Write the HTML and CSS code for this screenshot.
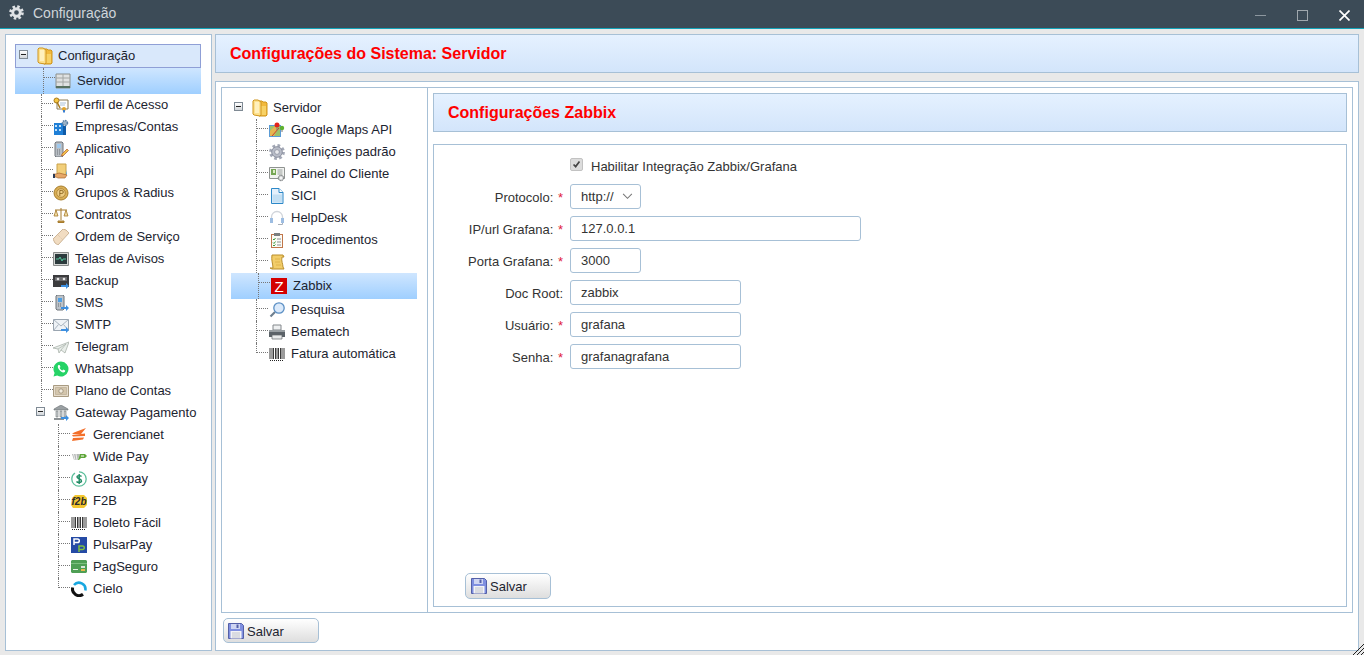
FILE: index.html
```
<!doctype html>
<html>
<head>
    <meta charset="utf-8" />
    <title>Configuração</title>
    <link rel="stylesheet" href="styles.css">
</head>
<body>
    <svg class="sprite" xmlns="http://www.w3.org/2000/svg">
        <symbol id="i-folder" viewBox="0 0 16 18"><path d="M7 2h3l1 1h3l1 1v12l-1 1H7z" fill="#f2b93c" stroke="#cf951c"/><path d="M9 7h5v9H9z" fill="#f8d266"/><path d="M1 2l1-1h4l3 2v13l-1 1-6-1-1-1z" fill="#fde08c" stroke="#cf951c"/><path d="M3 3h4v11H3z" fill="#fff0bd"/></symbol>
        <symbol id="i-server" viewBox="0 0 16 16"><path d="M1 1h14v14H1z" fill="#dfe1e1" stroke="#8b8f8c"/><path d="M8 1v12M1 5h14M1 9h14" stroke="#a3a6a4"/><path d="M1 13h14v2H1z" fill="#56705f"/></symbol>
        <symbol id="i-perfil" viewBox="0 0 16 16"><path d="M4 3h11v9H4z" fill="#fff" stroke="#8a7a55"/><path d="M7 6h6M7 8h5" stroke="#a9c0d8"/><circle cx="3.500" cy="3.500" r="2.500" fill="#f4c542" stroke="#a8791a"/><path d="M4 5l3 6" stroke="#a8791a" stroke-width="1.500"/><circle cx="11" cy="12" r="2" fill="#e2a52e"/><path d="M10 13v3l1-1 1 1v-3" fill="#3b7fd0"/></symbol>
        <symbol id="i-empresas" viewBox="0 0 16 16"><path d="M1 4h9v12H1z" fill="#1f7fd6"/><path d="M2 6h2v2H2zM6 6h2v2H6zM2 10h2v2H2zM6 10h2v2H6z" fill="#bfe0fb"/><path d="M10 7h3v9h-3z" fill="#0f5ba8"/><circle cx="12" cy="4" r="2.500" fill="#9db4c8" stroke="#5a7fa5" stroke-width="1.500" stroke-dasharray="1.500 .8"/></symbol>
        <symbol id="i-aplicativo" viewBox="0 0 16 16"><path d="M3 1h6l1 1v13l-1 1H3l-1-1V2z" fill="#b8bec4" stroke="#70767c"/><path d="M4 3h4v4H4z" fill="#9fc9ee"/><path d="M4 9h4M4 11h4M4 13h4" stroke="#6c7278" stroke-dasharray="1 1"/><path d="M9 13l5-5 1.500 1.500-5 5-2 .5z" fill="#f0c24a" stroke="#b45a2a" stroke-width=".7"/></symbol>
        <symbol id="i-api" viewBox="0 0 16 16"><path d="M4 1h9v11H4z" fill="#f2cf7a" stroke="#c9a24a"/><path d="M13 7l1 4-1 1z" fill="#5aa2dc"/><path d="M0 11h3l3-1 4 1 4 1-2 3H5l-2-1H0z" fill="#e7a869" stroke="#a8672f" stroke-width=".7"/><path d="M0 11h2v4H0z" fill="#2b3a55"/></symbol>
        <symbol id="i-coin" viewBox="0 0 16 16"><circle cx="8" cy="8" r="7" fill="#d9ae55" stroke="#a97f2e"/><circle cx="8" cy="8" r="4.300" fill="#eecd85" stroke="#b58c3c"/><path d="M6.800 11V5.500h2a1.400 1.400 0 010 3h-2" fill="none" stroke="#96712a"/></symbol>
        <symbol id="i-scales" viewBox="0 0 16 16"><path d="M8 1v12M2 3h12M5 14h6v1.500H5z" stroke="#a57a2c" fill="#c69a46"/><path d="M3 3L1 9h4zM13 3l-2 6h4z" fill="#f1dba2" stroke="#a57a2c" stroke-width=".8"/></symbol>
        <symbol id="i-ticket" viewBox="0 0 16 16"><path d="M0 10L10 0l3 1 3 3L5 16l-3-2z" fill="#f1dcc1" stroke="#cdb597"/><path d="M5 6l5 5" stroke="#d9c2a5" stroke-dasharray="1 1"/></symbol>
        <symbol id="i-monitor" viewBox="0 0 16 16"><path d="M.5 1.500h15v13H.5z" fill="#d4d6d4" stroke="#888b8a"/><path d="M2 3h12v10H2z" fill="#2c3b3d"/><path d="M3 8h3l1-2 2 4 1-2h3" fill="none" stroke="#53c49a"/></symbol>
        <symbol id="i-backup" viewBox="0 0 16 16"><path d="M0 2h16v12H0z" fill="#3c3c3e"/><path d="M2 4h12v4H2z" fill="#6b6b6e"/><circle cx="5" cy="6" r="1.300" fill="#e6e6e6"/><circle cx="11" cy="6" r="1.300" fill="#e6e6e6"/><path d="M8 12h5V10l3 3-3 3v-2H8z" fill="#3d8fe0"/></symbol>
        <symbol id="i-sms" viewBox="0 0 16 16"><path d="M4 0h6l1 1v13l-1 1H4l-1-1V1z" fill="#bcc2c8" stroke="#6f757b"/><path d="M5 3h4v4H5z" fill="#4f9fe3"/><path d="M5 9h4M5 11h4" stroke="#676d73" stroke-dasharray="1 1"/><path d="M8 12h5v-2l3 3-3 3v-2H8z" fill="#3d8fe0"/></symbol>
        <symbol id="i-mail" viewBox="0 0 16 16"><path d="M.5 2.500h15v11H.5z" fill="#eef2f6" stroke="#9aa5b0"/><path d="M.5 2.500L8 9l7.500-6.500M.5 13.500l5-6M15.500 13.500l-5-6" fill="none" stroke="#aab4bf"/><path d="M8 12h5v-2l3 3-3 3v-2H8z" fill="#3d8fe0"/></symbol>
        <symbol id="i-plane" viewBox="0 0 16 16"><path d="M0 9l16-6-4 11-4-3-2 3-1-4z" fill="#e9eeea" stroke="#a9b2ab" stroke-width=".8"/><path d="M5 10l8-5-5 6" fill="none" stroke="#a9b2ab" stroke-width=".7"/></symbol>
        <symbol id="i-whatsapp" viewBox="0 0 16 16"><path d="M8 .5a7.500 7.500 0 00-6.400 11.400L.5 15.500l3.700-1A7.500 7.500 0 108 .5z" fill="#25d366"/><path d="M5.500 4c-1 1-1 2.500.3 4.300 1.300 1.900 3 3.300 4.700 3.300 1 0 1.800-1 1.700-2l-2-1-.8 1c-1-.3-2.300-1.600-2.800-2.800l.9-.8-.9-2z" fill="#fff"/></symbol>
        <symbol id="i-money" viewBox="0 0 16 16"><path d="M.5 2.500h15v11H.5z" fill="#e6dccb" stroke="#a99b82"/><path d="M2.500 4.500h11v7h-11z" fill="#d4c6ad" stroke="#b5a78e" stroke-width=".6"/><circle cx="8" cy="8" r="2.200" fill="#f2ecdf" stroke="#8c7f68" stroke-width=".7"/></symbol>
        <symbol id="i-bank" viewBox="0 0 16 16"><path d="M8 0l7 4v1H1V4z" fill="#9aa0a3" stroke="#6a6f72" stroke-width=".6"/><path d="M3 6h2v6H3zM7 6h2v6H7zM11 6h2v6h-2z" fill="#c9ced0" stroke="#73787b" stroke-width=".6"/><path d="M1 13h10v2H1z" fill="#8c9194"/><path d="M8 12h5v-2l3 3-3 3v-2H8z" fill="#3d8fe0"/></symbol>
        <symbol id="i-gerencianet" viewBox="0 0 16 16"><path d="M15 1L3 5.500 1 7h9zM14 6.500L1 8l1 1.500 12-.5zM13 10.500L2 11l-1 3 11-1.500z" fill="#f36f2a"/></symbol>
        <symbol id="i-widepay" viewBox="0 0 16 16"><path d="M1 5h8l-2 6H3z" fill="#b5b8b6"/><path d="M2.500 5L4 11M5 5l1 6" stroke="#fff" stroke-width=".8"/><path d="M9 5h5l2 2-2 2h-4l-2 2H7z" fill="#5fa63a"/><path d="M10 7h3" stroke="#fff"/></symbol>
        <symbol id="i-galax" viewBox="0 0 16 16"><path d="M8 .8a7.200 7.200 0 017.200 7.200M15.200 8A7.200 7.200 0 018 15.200 7.200 7.200 0 01.800 8 7.200 7.200 0 014 2" fill="none" stroke="#5cbf9b" stroke-width="1.300"/><path d="M10.500 5.500C10 4.500 6 4 6 6c0 2 4.500 1.500 4.500 4 0 2-4 1.800-5 .5M8.200 3v10" fill="none" stroke="#1f8a63" stroke-width="1.400"/></symbol>
        <symbol id="i-f2b" viewBox="0 0 16 16"><path d="M4 2h9l3 3v7l-3 3H2l-2-3 1-7z" fill="#f3c62f"/><text x="8" y="12" class="svg-f2b">f2b</text></symbol>
        <symbol id="i-barcode" viewBox="0 0 16 16"><path d="M1 2v11M3 2v11M4.500 2v11M6.500 2v11M8 2v11M9.500 2v11M11.500 2v11M13 2v11M15 2v11" stroke="#222" stroke-width=".9"/><path d="M1 14.500h14" stroke="#222" stroke-dasharray="1 1"/></symbol>
        <symbol id="i-pulsar" viewBox="0 0 16 16"><path d="M0 0h16v16H0z" fill="#254aa5"/><path d="M3 8V2h3.500a1.800 1.800 0 010 3.600H3" fill="none" stroke="#fff" stroke-width="1.500"/><path d="M8 15V9h3.500a1.800 1.800 0 010 3.600H8" fill="none" stroke="#7fc041" stroke-width="1.500"/></symbol>
        <symbol id="i-card" viewBox="0 0 16 16"><path d="M1 1h14l1 1v11l-1 1H1l-1-1V2z" fill="#4f9f55"/><path d="M0 4h16v1H0z" fill="#7cc07f"/><path d="M2 10h5v1H2z" fill="#e6f2e4"/><path d="M10 7h4v2h-4z" fill="#d7e6d8"/><path d="M10 10h4v2h-4z" fill="#e9b94b"/></symbol>
        <symbol id="i-cielo" viewBox="0 0 16 16"><path d="M1.700 6.500A6.500 6.500 0 0012 13.200" fill="none" stroke="#111" stroke-width="3"/><path d="M3 4A6.500 6.500 0 0114.300 9.500" fill="none" stroke="#18a7e0" stroke-width="2.600"/></symbol>
        <symbol id="i-maps" viewBox="0 0 16 16"><path d="M0 3h12v12H0z" fill="#5b9bd5"/><path d="M1 4h10v10H1z" fill="#9cc26a"/><path d="M1 9l5-5 3 2-4 8H1z" fill="#e6b650"/><path d="M3 14l7-8" stroke="#c7442c"/><circle cx="8" cy="3" r="2.500" fill="#e2231a"/><circle cx="13" cy="6" r="2.200" fill="#5fb130"/><path d="M8 5v3M13 8v2" stroke="#777"/></symbol>
        <symbol id="i-gear" viewBox="0 0 16 16"><circle cx="8" cy="8" r="6.300" fill="none" stroke="#a3a8b6" stroke-width="3.200" stroke-dasharray="2.600 2.300"/><circle cx="8" cy="8" r="5.300" fill="#b8bcc8" stroke="#8d92a0"/><circle cx="8" cy="8" r="2.400" fill="#e9eaee" stroke="#8d92a0" stroke-width=".8"/></symbol>
        <symbol id="i-painel" viewBox="0 0 16 16"><path d="M.5 1.500h15v11H.5z" fill="#f2f3f1" stroke="#8f9391"/><path d="M2 3h5v6H2z" fill="#76a655"/><path d="M4 4h2v3H4z" fill="#dcecc8"/><path d="M8.500 4h5M8.500 6h5M8.500 8h5" stroke="#9aa09d"/><circle cx="12" cy="12" r="2.700" fill="#d5d7d8" stroke="#6d7173" stroke-dasharray="1.500 .6"/><circle cx="12" cy="12" r="1" fill="#fff"/></symbol>
        <symbol id="i-doc" viewBox="0 0 16 16"><path d="M2.500.5H10l4 4v11H2.500z" fill="#e4f0fb" stroke="#2c88c8"/><path d="M10 .5v4h4" fill="#fff" stroke="#2c88c8"/><path d="M3.500 6.500h9.500v8H3.500z" fill="#c3dff3"/></symbol>
        <symbol id="i-headset" viewBox="0 0 16 16"><path d="M2.500 9V7a5.500 5.500 0 0111 0v2" fill="none" stroke="#d0d4da" stroke-width="1.300"/><path d="M1 8h3v5H1zM12 8h3v5h-3z" fill="#9dbde2"/><path d="M13.500 13v1.500H9" fill="none" stroke="#a9b0ba"/></symbol>
        <symbol id="i-clip" viewBox="0 0 16 16"><path d="M2 2h12v14H2z" fill="#c0764a"/><path d="M3 3h10v12H3z" fill="#fbfbf6"/><path d="M5 1h6v3H5z" fill="#7b7f80"/><path d="M4 7l1 1 1.500-2M4 10.500l1 1 1.500-2M4 13l1 1 1.500-1.500" fill="none" stroke="#3b9a3e"/><path d="M8 7h4M8 10h4M8 13h4" stroke="#8a8f90"/></symbol>
        <symbol id="i-scroll" viewBox="0 0 16 16"><path d="M3 1h11l1 2h-2c-1 4 1 7 1 10l1 2H3l-2-1h3C4 10 2 6 3 1z" fill="#f2cd69" stroke="#b98d2b"/><path d="M6 5h5M6 8h5M7 11h5" stroke="#e0b44c"/></symbol>
        <symbol id="i-zabbix" viewBox="0 0 16 16"><path d="M0 0h16v16H0z" fill="#d40000"/><text x="8" y="13.500" class="svg-z">Z</text></symbol>
        <symbol id="i-search" viewBox="0 0 16 16"><path d="M1.500 14.500L6 10" stroke="#6e7f8f" stroke-width="2.200"/><circle cx="10" cy="6" r="5.200" fill="#dbeafb" stroke="#5b8fc4" stroke-width="1.300"/></symbol>
        <symbol id="i-printer" viewBox="0 0 16 16"><path d="M4 1h8v5H4z" fill="#eef0f1" stroke="#83888c"/><path d="M0 6h16v7H0z" fill="#5b6268"/><path d="M0 6h16v2H0z" fill="#989ea2"/><path d="M3 11h10v4H3z" fill="#e8eaeb" stroke="#62676b" stroke-width=".7"/></symbol>
        <symbol id="i-floppy" viewBox="0 0 16 16"><path d="M.5.500h13l2 2v13H.500z" fill="#7f8fe0" stroke="#5460a8"/><path d="M3 1h9v5H3z" fill="#cfd5f2"/><path d="M8.500 1.500h2v3.500h-2z" fill="#5460a8"/><path d="M2.500 8h11v7.500h-11z" fill="#f3f3f6"/><path d="M4 10h8M4 12h8M4 14h8" stroke="#c0c4cc"/></symbol>
    </svg>

    <header class="titlebar">
        <svg class="title-gear" viewBox="0 0 16 16"><circle cx="8" cy="8" r="6.200" fill="none" stroke="#dfe2e5" stroke-width="3.200" stroke-dasharray="2.600 2.270"/><circle cx="8" cy="8" r="4" fill="none" stroke="#dfe2e5" stroke-width="3"/></svg>
        <span class="title-text">Configuração</span>
        <span class="win-btn win-min"></span>
        <span class="win-btn win-max"></span>
        <svg class="win-close" viewBox="0 0 11 11"><path d="M.5.5l10 10M10.500.5l-10 10" stroke="#fff" stroke-width="1.700"/></svg>
    </header>

    <div class="desk">
        <aside class="side-panel">
            <div class="tree-root boxed"><i class="exp"></i><svg class="ic-folder"><use href="#i-folder"/></svg><span>Configuração</span></div>
            <ul class="tree">
                <li class="row sel"><i class="tick"></i><svg class="ic"><use href="#i-server"/></svg><span>Servidor</span></li>
                <li class="row"><i class="tick"></i><svg class="ic"><use href="#i-perfil"/></svg><span>Perfil de Acesso</span></li>
                <li class="row"><i class="tick"></i><svg class="ic"><use href="#i-empresas"/></svg><span>Empresas/Contas</span></li>
                <li class="row"><i class="tick"></i><svg class="ic"><use href="#i-aplicativo"/></svg><span>Aplicativo</span></li>
                <li class="row"><i class="tick"></i><svg class="ic"><use href="#i-api"/></svg><span>Api</span></li>
                <li class="row"><i class="tick"></i><svg class="ic"><use href="#i-coin"/></svg><span>Grupos &amp; Radius</span></li>
                <li class="row"><i class="tick"></i><svg class="ic"><use href="#i-scales"/></svg><span>Contratos</span></li>
                <li class="row"><i class="tick"></i><svg class="ic"><use href="#i-ticket"/></svg><span>Ordem de Serviço</span></li>
                <li class="row"><i class="tick"></i><svg class="ic"><use href="#i-monitor"/></svg><span>Telas de Avisos</span></li>
                <li class="row"><i class="tick"></i><svg class="ic"><use href="#i-backup"/></svg><span>Backup</span></li>
                <li class="row"><i class="tick"></i><svg class="ic"><use href="#i-sms"/></svg><span>SMS</span></li>
                <li class="row"><i class="tick"></i><svg class="ic"><use href="#i-mail"/></svg><span>SMTP</span></li>
                <li class="row"><i class="tick"></i><svg class="ic"><use href="#i-plane"/></svg><span>Telegram</span></li>
                <li class="row"><i class="tick"></i><svg class="ic"><use href="#i-whatsapp"/></svg><span>Whatsapp</span></li>
                <li class="row"><i class="tick"></i><svg class="ic"><use href="#i-money"/></svg><span>Plano de Contas</span></li>
                <li class="row row-group"><i class="exp"></i><svg class="ic"><use href="#i-bank"/></svg><span>Gateway Pagamento</span></li>
                <li class="row child"><i class="tick"></i><svg class="ic"><use href="#i-gerencianet"/></svg><span>Gerencianet</span></li>
                <li class="row child"><i class="tick"></i><svg class="ic"><use href="#i-widepay"/></svg><span>Wide Pay</span></li>
                <li class="row child"><i class="tick"></i><svg class="ic"><use href="#i-galax"/></svg><span>Galaxpay</span></li>
                <li class="row child"><i class="tick"></i><svg class="ic"><use href="#i-f2b"/></svg><span>F2B</span></li>
                <li class="row child"><i class="tick"></i><svg class="ic"><use href="#i-barcode"/></svg><span>Boleto Fácil</span></li>
                <li class="row child"><i class="tick"></i><svg class="ic"><use href="#i-pulsar"/></svg><span>PulsarPay</span></li>
                <li class="row child"><i class="tick"></i><svg class="ic"><use href="#i-card"/></svg><span>PagSeguro</span></li>
                <li class="row child"><i class="tick last"></i><svg class="ic"><use href="#i-cielo"/></svg><span>Cielo</span></li>
            </ul>
        </aside>

        <main class="main-col">
            <h1 class="head head-top">Configurações do Sistema: Servidor</h1>
            <section class="main-panel">
                <div class="inner">
                    <nav class="sub-tree">
                        <div class="tree-root plain"><i class="exp"></i><svg class="ic-folder"><use href="#i-folder"/></svg><span>Servidor</span></div>
                        <ul class="tree">
                            <li class="row"><i class="tick"></i><svg class="ic"><use href="#i-maps"/></svg><span>Google Maps API</span></li>
                            <li class="row"><i class="tick"></i><svg class="ic"><use href="#i-gear"/></svg><span>Definições padrão</span></li>
                            <li class="row"><i class="tick"></i><svg class="ic"><use href="#i-painel"/></svg><span>Painel do Cliente</span></li>
                            <li class="row"><i class="tick"></i><svg class="ic"><use href="#i-doc"/></svg><span>SICI</span></li>
                            <li class="row"><i class="tick"></i><svg class="ic"><use href="#i-headset"/></svg><span>HelpDesk</span></li>
                            <li class="row"><i class="tick"></i><svg class="ic"><use href="#i-clip"/></svg><span>Procedimentos</span></li>
                            <li class="row"><i class="tick"></i><svg class="ic"><use href="#i-scroll"/></svg><span>Scripts</span></li>
                            <li class="row sel"><i class="tick"></i><svg class="ic"><use href="#i-zabbix"/></svg><span>Zabbix</span></li>
                            <li class="row"><i class="tick"></i><svg class="ic"><use href="#i-search"/></svg><span>Pesquisa</span></li>
                            <li class="row"><i class="tick"></i><svg class="ic"><use href="#i-printer"/></svg><span>Bematech</span></li>
                            <li class="row"><i class="tick last"></i><svg class="ic"><use href="#i-barcode"/></svg><span>Fatura automática</span></li>
                        </ul>
                    </nav>
                    <div class="pane">
                        <h2 class="head head-pane">Configurações Zabbix</h2>
                        <form class="form-box">
                            <div class="form-grid">
                                <span></span>
                                <label class="check-line"><input type="checkbox" class="check" checked><span>Habilitar Integração Zabbix/Grafana</span></label>
                                <label class="lbl">Protocolo: <b>*</b></label>
                                <select class="field w-s"><option>http://</option></select>
                                <label class="lbl">IP/url Grafana: <b>*</b></label>
                                <input class="field w-l" value="127.0.0.1">
                                <label class="lbl">Porta Grafana: <b>*</b></label>
                                <input class="field w-s" value="3000">
                                <label class="lbl">Doc Root:</label>
                                <input class="field w-m" value="zabbix">
                                <label class="lbl">Usuário: <b>*</b></label>
                                <input class="field w-m" value="grafana">
                                <label class="lbl">Senha: <b>*</b></label>
                                <input class="field w-m" value="grafanagrafana">
                            </div>
                            <button type="button" class="btn btn-form"><svg class="ic"><use href="#i-floppy"/></svg>Salvar</button>
                        </form>
                    </div>
                </div>
                <footer class="foot">
                    <button type="button" class="btn btn-foot"><svg class="ic"><use href="#i-floppy"/></svg>Salvar</button>
                </footer>
            </section>
        </main>
    </div>

    <svg class="grip" viewBox="0 0 12 12"><path d="M1 12L12 1M5 12l7-7M9 12l3-3" stroke="#222"/></svg>
</body>
</html>
```

FILE: styles.css
```
*{
    box-sizing:border-box;
}
html,body{
    height:100%;
}
body{
    margin:0;
    height:655px;
    overflow:hidden;
    display:flex;
    flex-direction:column;
    position:relative;
    background-color:#e9e9e9;
    color:#1c2430;
    font:13px/22px "Liberation Sans",Arial,sans-serif;
}
.sprite{
    display:none;
}
.svg-z{
    font:15px "Liberation Sans",Arial,sans-serif;
    fill:#fff;
    text-anchor:middle;
}
.svg-f2b{
    font:italic bold 10px "Liberation Sans",Arial,sans-serif;
    fill:#2b2b2b;
    text-anchor:middle;
}

/* window title */
.titlebar{
    flex:none;
    height:29px;
    display:flex;
    align-items:center;
    padding-left:9px;
    background-color:#3c4b57;
    border-bottom:1px solid #14a3b8;
    color:#cfd5da;
}
.title-gear{
    width:15px;
    height:15px;
    margin-top:-3px;
}
.title-text{
    margin-left:9px;
    margin-top:-2px;
    font-size:14px;
}
.win-btn{
    display:block;
}
.win-min{
    width:11px;
    height:1px;
    margin-left:auto;
    margin-top:2px;
    background-color:#8d979f;
}
.win-max{
    width:11px;
    height:11px;
    margin-left:31px;
    margin-top:2px;
    border:1px solid #a0a8ae;
}
.win-close{
    width:11px;
    height:11px;
    margin-left:31px;
    margin-top:2px;
    margin-right:14px;
}

/* layout */
.desk{
    flex:1;
    min-height:0;
    display:flex;
    gap:3px;
    padding:5px 5px 4px 5px;
}
.side-panel{
    flex:none;
    width:207px;
    padding:9px 10px 0 9px;
    background-color:#fff;
    border:1px solid #a7c0d6;
}
.main-col{
    flex:1;
    min-width:0;
    display:flex;
    flex-direction:column;
    gap:8px;
}
.head{
    flex:none;
    height:39px;
    margin:0;
    padding-left:14px;
    border:1px solid #a7c0d6;
    background:linear-gradient(#e5f1ff,#d3e5fb);
    color:#f00;
    font-size:16px;
    font-weight:bold;
    line-height:37px;
}
.main-panel{
    flex:1;
    min-height:0;
    display:flex;
    flex-direction:column;
    padding:5px 5px 0 5px;
    background-color:#fff;
    border:1px solid #a7c0d6;
}
.inner{
    flex:1;
    min-height:0;
    display:flex;
    border:1px solid #a7c0d6;
}
.sub-tree{
    flex:none;
    width:206px;
    padding:9px 10px 0 9px;
    border-right:1px solid #a7c0d6;
}
.pane{
    flex:1;
    min-width:0;
    display:flex;
    flex-direction:column;
    gap:12px;
    padding:5px;
}
.foot{
    flex:none;
    height:37px;
    padding:5px 0 0 2px;
}

/* trees */
.tree{
    margin:0;
    padding:0;
    list-style:none;
}
.tree-root{
    display:flex;
    align-items:center;
    height:22px;
}
.tree-root.boxed{
    height:24px;
    padding-left:3px;
    background-color:#d9e8fb;
    border:1px solid #8f9fd6;
}
.tree-root.boxed .exp{
    margin-right:9px;
}
.tree-root.plain{
    padding-left:3px;
}
.tree-root.plain .exp{
    margin-right:10px;
}
.tree-root.plain .ic-folder{
    margin-left:-1px;
}
.ic-folder{
    width:16px;
    height:18px;
    margin-right:5px;
}
.exp{
    flex:none;
    width:9px;
    height:9px;
    margin-top:-3px;
    border:1px solid #7f8a94;
    background:linear-gradient(#fff,#d2d6da);
    position:relative;
}
.exp::after{
    content:"";
    position:absolute;
    left:1px;
    top:3px;
    width:5px;
    height:1px;
    background-color:#222;
}
.row{
    display:flex;
    align-items:center;
    height:22px;
    padding-left:26px;
    white-space:nowrap;
}
.ic{
    flex:none;
    width:16px;
    height:16px;
    margin-right:6px;
}
.tick{
    flex:none;
    align-self:flex-start;
    width:12px;
    height:22px;
    border-left:1px dotted #777;
    background:linear-gradient(90deg,#777 50%,transparent 50%) 0 9px/2px 1px repeat-x;
}
.tick.last{
    height:10px;
}
.row.sel{
    height:26px;
    padding-left:28px;
    background:linear-gradient(#cfe6ff,#9fcfff);
}
.row.sel .tick{
    height:26px;
}
.row-group{
    padding-left:21px;
}
.row-group .exp{
    margin-right:8px;
}
.child{
    padding-left:43px;
}
.child .tick{
    width:13px;
}
.sub-tree .row{
    padding-left:25px;
}
.sub-tree .tick{
    width:13px;
}
.sub-tree .row.sel{
    padding-left:27px;
}

/* form */
.form-box{
    flex:1;
    min-height:0;
    display:flex;
    flex-direction:column;
    align-items:flex-start;
    justify-content:space-between;
    padding:7px 0 7px 0;
    border:1px solid #a7c0d6;
}
.form-grid{
    display:grid;
    grid-template-columns:129px 1fr;
    column-gap:7px;
    row-gap:7px;
    grid-auto-rows:25px;
    width:100%;
    align-items:center;
}
.check-line{
    display:flex;
    align-items:center;
    color:#333;
}
.check-line span{
    padding-top:5px;
}
.check{
    appearance:none;
    width:13px;
    height:13px;
    margin:0 8px 0 0;
    border:1px solid #c2c2c2;
    border-radius:2px;
    background:#dcdcdc url("data:image/svg+xml,%3Csvg xmlns='http://www.w3.org/2000/svg' viewBox='0 0 13 13'%3E%3Cpath d='M3 6.500l2.500 2.500 4.500-6' fill='none' stroke='%23444' stroke-width='2'/%3E%3C/svg%3E") center no-repeat;
}
.lbl{
    padding-top:2px;
    text-align:right;
    color:#333;
}
.lbl b{
    margin-left:1px;
    color:#e0203a;
    font-weight:normal;
}
.field{
    display:block;
    height:25px;
    padding:0 0 1px 10px;
    border:1px solid #a7c0d6;
    border-radius:3px;
    background-color:#fff;
    color:#333;
    font:13px "Liberation Sans",Arial,sans-serif;
    outline:none;
}
select.field{
    appearance:none;
    background:#fff url("data:image/svg+xml,%3Csvg xmlns='http://www.w3.org/2000/svg' viewBox='0 0 12 8'%3E%3Cpath d='M1 1l5 5 5-5' fill='none' stroke='%23777' stroke-width='1.200'/%3E%3C/svg%3E") right 7px center/11px 7px no-repeat;
}
.w-s{
    width:71px;
}
.w-m{
    width:171px;
}
.w-l{
    width:291px;
}

/* buttons */
.btn{
    display:flex;
    align-items:center;
    height:25px;
    padding:0 0 0 4px;
    border:1px solid #a7c0d6;
    border-radius:5px;
    background:linear-gradient(#fff,#dedede);
    color:#1c2430;
    font:13px "Liberation Sans",Arial,sans-serif;
}
.btn .ic{
    margin-right:3px;
}
.btn-form{
    width:86px;
    height:26px;
    margin-left:31px;
    padding-left:5px;
}
.btn-foot{
    width:96px;
    padding-top:1px;
}

/* window resize corner */
.grip{
    position:absolute;
    right:0;
    bottom:0;
    width:12px;
    height:12px;
}
```
